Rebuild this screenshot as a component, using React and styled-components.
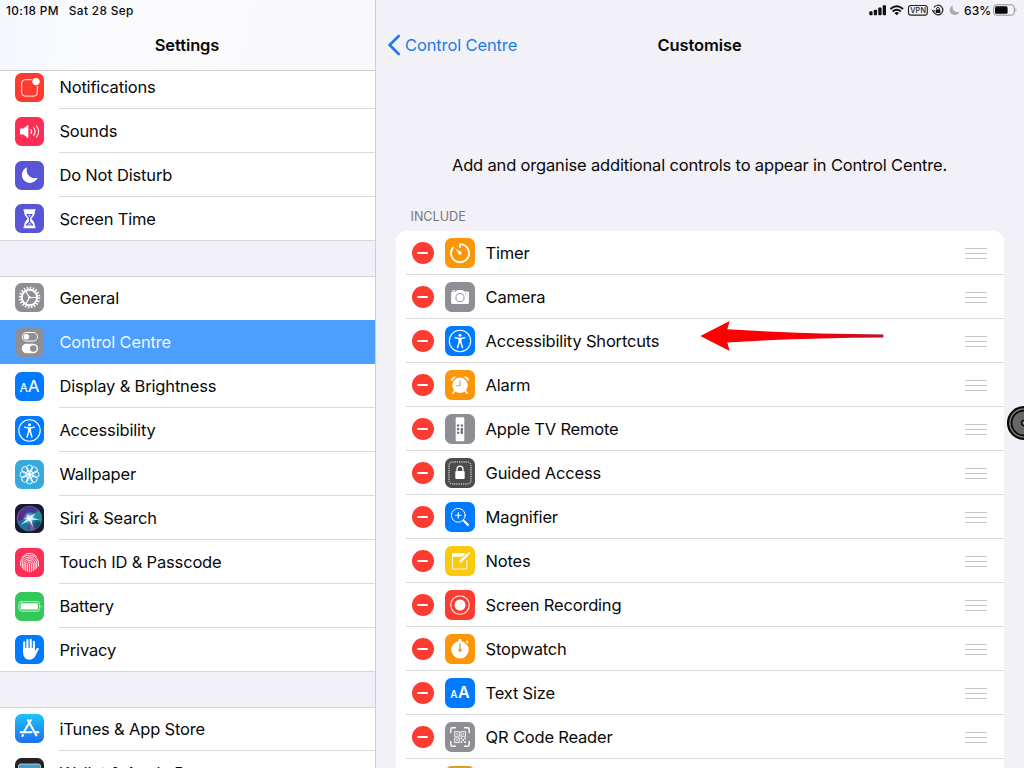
import React from "react";
import styled, { createGlobalStyle } from "styled-components";

const Global = createGlobalStyle`
  * { box-sizing: border-box; }
  html, body { margin: 0; padding: 0; background: #f2f1f7; }
  body { font-family: Inter, "Liberation Sans", sans-serif; color: #0a0a0a; overflow: hidden; }
  svg { display: block; flex: none; }
`;

const Screen = styled.div`
  position: relative;
  width: 1024px;
  height: 768px;
  display: flex;
  overflow: hidden;
  background: #f2f1f7;
`;

const Sidebar = styled.aside`
  width: 376px;
  height: 768px;
  flex: none;
  display: flex;
  flex-direction: column;
  border-right: 1px solid #cfced3;
  background: #f1f0f6;
`;

const SidebarHeader = styled.header`
  height: 71px;
  flex: none;
  border-bottom: 1px solid #cdc8cc;
  background: linear-gradient(100deg, #f3f8ff 0, #f9fafd 22%, #f9f9fb 100%);
`;

const StatusLeft = styled.div`
  height: 20px;
  padding-left: 6px;
  padding-top: 1px;
  display: flex;
  align-items: center;
  gap: 10px;
  font-size: 11.8px;
  font-weight: 500;
  letter-spacing: 0.37px;
  white-space: nowrap;
`;

const NavTitle = styled.h1`
  margin: 0;
  padding-right: 1px;
  height: 50px;
  line-height: 50px;
  text-align: center;
  font-size: 16.5px;
  font-weight: 600;
  letter-spacing: -0.1px;
`;

const SidebarScroll = styled.div`
  flex: 1;
  min-height: 0;
  overflow: hidden;
`;

const Group = styled.div`
  background: #fff;
  margin-top: ${(p) => p.$top}px;
  border-top: ${(p) => (p.$first ? "0" : "1px solid #d6d5da")};
  border-bottom: 1px solid #d6d5da;
`;

const SettingRow = styled.div`
  height: ${(p) => (p.$edge ? 43 : 44)}px;
  padding-left: 15px;
  display: flex;
  align-items: center;
  background: ${(p) => (p.$active ? "#4c9fff" : "transparent")};
  color: ${(p) => (p.$active ? "#eef6ff" : "inherit")};
`;

const SettingLabel = styled.div`
  flex: 1;
  height: 100%;
  margin-left: 15.4px;
  display: flex;
  align-items: center;
  padding-top: ${(p) => (p.$raised ? 0 : 1)}px;
  padding-bottom: ${(p) => (p.$raised ? 1 : 0)}px;
  border-bottom: 1px solid ${(p) => (p.$line ? "#d9d9dc" : "transparent")};
  font-size: 16.5px;
  letter-spacing: -0.17px;
  white-space: nowrap;
`;

const Main = styled.main`
  flex: 1;
  min-width: 0;
  display: flex;
  flex-direction: column;
`;

const StatusRight = styled.div`
  height: 20px;
  padding-right: 7px;
  display: flex;
  align-items: center;
  justify-content: flex-end;
`;

const Percent = styled.span`
  width: 29px;
  font-size: 12px;
  font-weight: 500;
  letter-spacing: 0.1px;
`;

const NavBar = styled.div`
  height: 50px;
  padding: 0 12px 0 11px;
  display: grid;
  grid-template-columns: 1fr auto 1fr;
  align-items: center;
`;

const Back = styled.div`
  display: flex;
  align-items: center;
  gap: 4px;
  color: #1a7ee6;
  font-size: 16.5px;
  letter-spacing: -0.13px;
`;

const PageTitle = styled.h2`
  margin: 0;
  font-size: 16.5px;
  font-weight: 600;
  letter-spacing: -0.1px;
`;

const Hint = styled.p`
  margin: 82px 1px 0 0;
  height: 26px;
  line-height: 26px;
  text-align: center;
  font-size: 16.5px;
  letter-spacing: -0.17px;
  white-space: nowrap;
`;

const SectionLabel = styled.div`
  margin: 29px 0 5px 34.5px;
  height: 19px;
  line-height: 19px;
  font-size: 12.6px;
  color: #77767c;
`;

const Card = styled.section`
  margin: 0 20px;
  flex: 1;
  min-height: 0;
  overflow: hidden;
  border-radius: 10px 10px 0 0;
  background: #fff;
`;

const ControlRow = styled.div`
  height: 44px;
  margin-left: 10px;
  padding: 0 17px 0 5px;
  display: flex;
  align-items: center;
  border-bottom: 1px solid #d9d9dc;
`;

const Remove = styled.span`
  width: 22px;
  height: 22px;
  margin: 1px 11.600px 0 0.500px;
  flex: none;
  border-radius: 50%;
  background: #fd3b31;
  display: flex;
  align-items: center;
  justify-content: center;
  &::after { content: ""; width: 11px; height: 2px; border-radius: 1px; background: #fff; }
`;

const ControlLabel = styled.span`
  flex: 1;
  margin-left: 10.500px;
  font-size: 16.5px;
  letter-spacing: -0.19px;
  white-space: nowrap;
`;

const Handle = styled.span`
  width: 22px;
  height: 11px;
  margin-top: 2px;
  border-top: 1px solid #c4c4c8;
  border-bottom: 1px solid #c4c4c8;
  display: flex;
  align-items: center;
  &::after { content: ""; width: 100%; height: 1px; background: #c4c4c8; }
`;

const TileBox = styled.span`
  width: ${(p) => p.$size}px;
  height: ${(p) => p.$size}px;
  margin-top: ${(p) => (p.$size === 30 ? 1 : 0)}px;
  margin-bottom: ${(p) => (p.$raised ? 2 : 0)}px;
  flex: none;
  border-radius: 6.5px;
  overflow: hidden;
  background: ${(p) => p.$bg};
`;

const Arrow = styled.svg`
  position: absolute;
  left: 696px;
  top: 316px;
`;

const Assist = styled.svg`
  position: absolute;
  left: 1006px;
  top: 405px;
`;

const W = "#fff";
const S = { fill: "none", stroke: W, strokeLinecap: "round", strokeLinejoin: "round" };

const Person = () => (
  <>
    <circle cx="14.5" cy="14.5" r="10.7" {...S} strokeWidth="1.1" />
    <circle cx="14.5" cy="8.7" r="1.5" fill={W} />
    <path d="M9 11.2c0-.5.3-.7.8-.6 3.1.7 6.3.7 9.4 0 .5-.1.8.1.8.6s-.3.6-.7.7l-3.2.6v3l1.500 5.300c.2.600 0 .900-.4 1s-.8-.1-1-.6l-1.400-4.700h-.6l-1.400 4.700c-.2.500-.600.700-1 .6s-.600-.4-.4-1l1.500-5.300v-3l-3.200-.6c-.4-.1-.7-.2-.7-.7Z" fill={W} />
  </>
);

const Gear = () => (
  <g {...S} strokeLinecap="butt">
    <circle cx="14.5" cy="14.5" r="9.7" strokeWidth="2.2" strokeDasharray="1.5 1.547" />
    <circle cx="14.5" cy="14.5" r="7.7" strokeWidth="2" />
    <path d="M14.5 14.5H22M14.5 14.5 10.7 8M14.5 14.5 10.7 21" strokeWidth="1.2" />
    <circle cx="14.5" cy="14.5" r="1.3" fill={W} stroke="none" />
  </g>
);

const Petals = () => (
  <g fill="none" stroke={W} strokeWidth=".95">
    {[0, 45, 90, 135, 180, 225, 270, 315].map((a) => (
      <ellipse key={a} cx="14.5" cy="8" rx="3" ry="3" transform={`rotate(${a} 14.5 14.5)`} />
    ))}
    <circle cx="14.5" cy="14.5" r="3.5" />
    <circle cx="14.5" cy="14.5" r="1.9" fill={W} />
  </g>
);

const Siri = () => (
  <>
    <defs>
      <radialGradient id="siriCore"><stop offset="0" stopColor="#fff" /><stop offset=".35" stopColor="#9fe9f4" stopOpacity=".8" /><stop offset="1" stopColor="#36b6dc" stopOpacity="0" /></radialGradient>
      <linearGradient id="siriTone" x1="0" y1="0" x2="1" y2="1"><stop offset="0" stopColor="#8a2784" /><stop offset=".35" stopColor="#4d2a8b" /><stop offset=".65" stopColor="#176f91" /><stop offset="1" stopColor="#122037" /></linearGradient>
    </defs>
    <circle cx="14.5" cy="14.5" r="12.3" fill="url(#siriTone)" stroke="#71809f" strokeWidth=".7" />
    <path d="M14 13 2.5 17.5C4 24 9 26.5 12 26.5Z" fill="#227c9e" opacity=".8" />
    <path d="M15 13 23.5 6.5C27 11 27 15 26 18Z" fill="#1fa39a" opacity=".7" />
    <path d="M14.5 13 8 4.5C12 2 16 2 18.5 3.5Z" fill="#3b3c98" opacity=".8" />
    <path d="M14.5 14 20 25.5 15 26.5Z" fill="#bd4ba7" opacity=".7" />
    <circle cx="14.5" cy="14" r="7" fill="url(#siriCore)" />
    <path d="M14.5 12.7 20.5 9 17 13.8 25 16 16.5 15.8 18 23.500 14.5 16.3 5.500 21 12.500 14.800 8 14.700 12.700 13.200 11.500 9.500Z" fill="#eafcff" opacity=".92" />
  </>
);

const Finger = () => (
  <g {...S} strokeWidth=".95">
    <path d="M7.2 9.2C9 6.7 11.600 5.400 14.500 5.400s5.500 1.300 7.300 3.800" />
    <path d="M5.600 17.500v-2.200c0-4.600 4-8 8.900-8s8.900 3.400 8.900 8v2.800" />
    <path d="M7.300 20v-4.600c0-3.700 3.100-6.300 7.200-6.300s7.200 2.600 7.200 6.300V20" />
    <path d="M9 21.800v-6c0-3 2.300-5 5.500-5s5.500 2 5.500 5v5.700" />
    <path d="M10.800 22.800v-6.700c0-2.200 1.500-3.600 3.700-3.600s3.700 1.400 3.700 3.600v6.700" />
    <path d="M12.600 23.600v-7.300c0-1.300.8-2.100 1.900-2.100s1.900.8 1.900 2.100v7.300" />
    <path d="M14.500 16v8" />
  </g>
);

const SETTING_ICONS = {
  notifications: { bg: "#fd3b30", art: (
    <>
      <path d="M16.500 6.700H10a3.300 3.300 0 0 0-3.300 3.300v9.800a3.300 3.300 0 0 0 3.300 3.300h9a3.300 3.300 0 0 0 3.300-3.300V13.300" {...S} strokeWidth=".9" />
      <circle cx="21" cy="8.600" r="3.700" fill={W} />
    </>
  ) },
  sounds: { bg: "#fd2d55", art: (
    <>
      <path d="M5 12.200c0-.5.300-.8.800-.8h2.700l4-3.100c.5-.4.900-.2.900.4v11.600c0 .6-.4.800-.9.400l-4-3.100H5.800c-.5 0-.8-.3-.8-.8Z" fill={W} />
      <path d="M16 12.500q1.300 2 0 4M18.700 10.700q2.700 3.800 0 7.600M21.500 8.900q4.200 5.600 0 11.200" {...S} strokeWidth="1.100" />
    </>
  ) },
  moon: { bg: "#5855d6", art: <path d="M12 6.300c-1.800 6.600 3.500 12.700 10.700 10.500C21 20.100 18.200 22 15 22c-4.500 0-8.100-3.500-8.100-7.900 0-3.500 2-6.600 5.100-7.800Z" fill={W} /> },
  hourglass: { bg: "#5855d6", art: (
    <>
      <path d="M8.600 5.300h11.800v1.800h-.5c0 3.800-1.300 5.300-3.600 7.700 2.300 2.400 3.600 3.900 3.600 7.500h.5v1.900H8.600v-1.900h.5c0-3.600 1.300-5.100 3.600-7.500C10.400 12.400 9.100 10.900 9.100 7.100h-.5Z" fill={W} />
      <path d="M11.200 10h6.600c-.5 1.500-1.300 2.400-2.700 3.900v3.500l3 3.100v1h-7.200v-1l3-3.100v-3.500c-1.400-1.500-2.200-2.400-2.700-3.900Z" fill="#5855d6" />
      <path d="M12.800 11.200h3.400L14.500 13ZM14.500 18.500l2 2h-4Z" fill={W} opacity=".75" />
    </>
  ) },
  gear: { bg: "#8f8e94", art: <Gear /> },
  toggles: { bg: "#8f8e94", art: (
    <>
      <rect x="7.200" y="4.500" width="15.300" height="8.600" rx="4.300" {...S} strokeWidth="1" />
      <circle cx="11.400" cy="8.800" r="2.800" fill={W} />
      <rect x="6.800" y="15.700" width="16.200" height="9.600" rx="4.800" fill={W} />
      <circle cx="18.300" cy="20.500" r="3.300" fill="#8f8e94" />
    </>
  ) },
  display: { bg: "#007aff", art: (
    <g fill={W} stroke={W} strokeWidth=".2" fontFamily="Inter, sans-serif"><text x="4.700" y="20.300" fontSize="11.600">A</text><text x="13" y="20.300" fontSize="16.500">A</text></g>
  ) },
  access: { bg: "#007aff", art: <Person /> },
  wallpaper: { bg: "#37aadd", art: <Petals /> },
  siri: { bg: "#171b32", art: <Siri /> },
  touch: { bg: "#fd2d55", art: <Finger /> },
  battery: { bg: "#34c759", art: (
    <>
      <rect x="3.900" y="9.600" width="20.700" height="9.600" rx="2.600" {...S} strokeWidth=".7" />
      <rect x="5.600" y="11.200" width="17.300" height="6.400" rx="1.200" fill={W} />
      <path d="M25.900 12.900q1.500 1.500 0 3Z" fill={W} />
    </>
  ) },
  hand: { bg: "#007aff", art: (
    <>
      <path d="M9.200 7.400v9M12.400 5.100v11M15.700 4.800v11M18.900 6.700v10" {...S} strokeWidth="2.100" />
      <path d="M8.150 13h11.800v3.200l1.600-2.800c.6-1 2-.8 2.200-.1.200.4 0 .9-.2 1.300l-2.500 5c-1.400 3.200-3 5.100-6.500 5.100-4 0-6.400-2.800-6.400-7Z" fill={W} />
    </>
  ) },
  store: { bg: "linear-gradient(#1dc3fa, #1d6ff2)", art: (
    <g {...S} strokeWidth="2.100">
      <path d="M15.800 6.200 8.700 18.300M12.900 6.200l8.400 15.100M5.700 18.300H16.500M20.500 18.300h2.900M7.900 21.200l-.5.800" />
    </g>
  ) },
  wallet: { bg: "#232227", art: (
    <>
      <rect x="3.500" y="6" width="22" height="18" rx="2" fill="#4a9cc9" stroke="#d9d7cf" strokeWidth=".8" />
      <path d="M3.500 11h22" stroke="#f1b93b" strokeWidth="2" />
    </>
  ) },
};

const CONTROL_ICONS = {
  timer: { bg: "#fb9608", art: (
    <>
      <path d="M15 6.200v3.500M15 6.200a9 9 0 1 1-6.600 2.900" {...S} strokeWidth="1.800" strokeLinecap="butt" />
      <path d="m10.200 10.600 5.900 3.100a1.700 1.700 0 1 1-2.500 2.400Z" fill={W} />
    </>
  ) },
  camera: { bg: "#8f8e94", art: (
    <>
      <path d="M6.200 11c0-.9.500-1.400 1.400-1.400h3.500l1-1.600h5.900l1 1.600h3.500c.9 0 1.400.5 1.400 1.400v9.600c0 .9-.5 1.400-1.400 1.400h-15c-.9 0-1.400-.5-1.400-1.400Z" fill={W} />
      <path d="M7.700 8.500h2.200" stroke={W} strokeWidth="1" />
      <circle cx="15" cy="15.600" r="4.100" fill="none" stroke="#8f8e94" strokeWidth="1" />
      <circle cx="20.800" cy="11.700" r=".6" fill="#8f8e94" />
    </>
  ) },
  access: { bg: "#007aff", art: <g transform="translate(.5 .5)"><Person /></g> },
  alarm: { bg: "#fb9608", art: (
    <>
      <path d="M6.300 11.200c-1-2.500 1.500-5.400 4.800-4.600ZM23.700 11.200c1-2.500-1.500-5.400-4.800-4.600Z" fill={W} />
      <circle cx="15" cy="15.300" r="7.700" fill={W} />
      <path d="m10 20.500-2.200 2.700M20 20.500l2.200 2.700" {...S} strokeWidth="1.500" />
      <path d="M15 10.500v5.300h-3.500" fill="none" stroke="#d99a3c" strokeWidth="1" />
    </>
  ) },
  remote: { bg: "#8f8e94", art: (
    <>
      <rect x="10.700" y="3.200" width="8.600" height="24" rx="1.200" fill={W} />
      <g fill="#77767c">
        {[0, 1, 2].map((r) => [0, 1].map((c) => <circle key={`${r}${c}`} cx={13.1 + c * 3.8} cy={11.5 + r * 3.6} r="1.300" />))}
        <rect x="15.700" y="13.900" width="2.300" height="6" rx="1" />
      </g>
    </>
  ) },
  guided: { bg: "#4c4b4d", art: (
    <>
      <rect x="4" y="4" width="22" height="22" rx="3.500" fill="none" stroke={W} strokeWidth="1" strokeDasharray="1.200 1" />
      <rect x="10.300" y="13.100" width="9.400" height="8" rx="1" fill={W} />
      <path d="M12 13.500v-2.300a3 3 0 0 1 6 0v2.300" {...S} strokeWidth="1.300" />
    </>
  ) },
  magnifier: { bg: "#007aff", art: (
    <>
      <circle cx="13.300" cy="13.300" r="6.900" {...S} strokeWidth="1" />
      <path d="M13.300 10.500v5.600M10.500 13.300h5.600" {...S} strokeWidth="1.100" />
      <path d="m18.300 18.300 1.200 1.200" {...S} strokeWidth="1.100" />
      <path d="m19.300 19.300 3.600 3.600" {...S} strokeWidth="2.200" />
    </>
  ) },
  notes: { bg: "#fbca0c", art: (
    <>
      <path d="M21.800 14.500v7.700a.8.800 0 0 1-.8.800H8.300a.8.800 0 0 1-.8-.8V8.500" {...S} strokeWidth=".9" />
      <path d="M7.100 8.200c0-.6.400-1 1-1h12.700l-3.300 3.500H7.100Z" fill={W} />
      <path d="m14 17 .6-2.700 7.700-7.100 1.700 1.900-7.400 7.200Z" fill={W} stroke="#fbca0c" strokeWidth=".5" />
      <path d="m22.700 6.700.8-.7c.8-.5 2.300.8 1.600 1.700l-.7.900Z" fill={W} />
    </>
  ) },
  record: { bg: "#fd3b30", art: (
    <>
      <circle cx="15" cy="15" r="9.300" {...S} strokeWidth="1.100" />
      <circle cx="15" cy="15" r="5.500" fill={W} />
    </>
  ) },
  stopwatch: { bg: "#fb9608", art: (
    <>
      <circle cx="15" cy="15.800" r="8.700" fill={W} />
      <path d="M13.400 5.700c0-1 3.200-1 3.200 0V8h-3.200ZM20.800 7.300l1.500-.9 1.300 1.900-1 1.300Z" fill={W} />
      <path d="M15 9.500v6" stroke="#e49428" strokeWidth="1.300" />
      <circle cx="15" cy="16.200" r="1.600" fill="#e49428" />
    </>
  ) },
  text: { bg: "#007aff", art: (
    <g fill={W} fontFamily="Inter, sans-serif" fontWeight="600"><text x="5.300" y="20.300" fontSize="9.800">A</text><text x="12.900" y="20.300" fontSize="16">A</text></g>
  ) },
  qr: { bg: "#8f8e94", art: (
    <>
      <path d="M5.800 10.500v-3c0-1 .7-1.700 1.700-1.700h3M19.500 5.800h3c1 0 1.700.7 1.700 1.700v3M24.200 19.500v3c0 1-.7 1.700-1.700 1.700h-3M10.500 24.200h-3c-1 0-1.700-.7-1.700-1.700v-3" {...S} strokeWidth="1.400" />
      <g fill="none" stroke={W} strokeWidth=".9">
        <rect x="9.700" y="9.700" width="4.500" height="4.500" /><rect x="16" y="9.700" width="4.500" height="4.500" /><rect x="9.700" y="16" width="4.500" height="4.500" />
      </g>
      <path d="M11.300 11.300h1.300v1.300h-1.300zM17.600 11.300h1.300v1.300h-1.300zM11.300 17.600h1.300v1.300h-1.300zM15.600 15.600h1.600v1.600h-1.600zM17.400 17.300h1.600v1.600h-1.600zM19.300 15.600h1.600v1.600h-1.600zM15.600 19.300h1.600v1.600h-1.600zM19.300 19.300h1.600v1.600h-1.600z" fill={W} />
    </>
  ) },
  wallet: { bg: "#dd9a34", art: null },
};

const Tile = ({ icon, size, raised }) => (
  <TileBox $size={size} $bg={icon.bg} $raised={raised}>
    <svg width={size} height={size} viewBox={`0 0 ${size} ${size}`}>{icon.art}</svg>
  </TileBox>
);

const GROUPS = [
  { top: -6, rows: [["notifications", "Notifications"], ["sounds", "Sounds"], ["moon", "Do Not Disturb"], ["hourglass", "Screen Time"]] },
  { top: 35, rows: [["gear", "General"], ["toggles", "Control Centre"], ["display", "Display & Brightness"], ["access", "Accessibility"], ["wallpaper", "Wallpaper"], ["siri", "Siri & Search"], ["touch", "Touch ID & Passcode"], ["battery", "Battery"], ["hand", "Privacy"]] },
  { top: 35, rows: [["store", "iTunes & App Store"], ["wallet", "Wallet & Apple Pay"]] },
];

const CONTROLS = [
  ["timer", "Timer"], ["camera", "Camera"], ["access", "Accessibility Shortcuts"], ["alarm", "Alarm"],
  ["remote", "Apple TV Remote"], ["guided", "Guided Access"], ["magnifier", "Magnifier"], ["notes", "Notes"],
  ["record", "Screen Recording"], ["stopwatch", "Stopwatch"], ["text", "Text Size"], ["qr", "QR Code Reader"],
  ["wallet", ""],
];

const StatusIcons = () => (
  <svg width="95" height="20" viewBox="869 0 95 20">
    <g fill="#111">
      <rect x="869.300" y="11.300" width="3.300" height="3.900" rx=".8" />
      <rect x="873.800" y="9.700" width="3.300" height="5.500" rx=".8" />
      <rect x="878.300" y="7.600" width="3.300" height="7.600" rx=".8" />
      <rect x="882.700" y="5.300" width="3.300" height="9.900" rx=".8" />
      <path d="m896.700 15.300-2.300-2.400q2.300-1.900 4.600 0Z" />
    </g>
    <g fill="none" stroke="#111" strokeWidth="1.900">
      <path d="M890.400 9q6.300-5.400 12.600 0M892.600 11.500q4.100-3.400 8.200 0" />
    </g>
    <rect x="908.500" y="5.500" width="18.800" height="9.600" rx="2.400" fill="none" stroke="#222" strokeWidth="1.100" />
    <text x="910.300" y="13.100" fontFamily="Inter, sans-serif" fontSize="7.300" fontWeight="500" fill="#222" letterSpacing=".15">VPN</text>
    <path d="M934 7.400a4.800 4.800 0 1 1-.7 3.500M932.200 10.200l1.200 1.500 1.400-1.400" fill="none" stroke="#222" strokeWidth="1.200" />
    <rect x="935.700" y="9.400" width="4.600" height="3.500" rx=".5" fill="#111" />
    <path d="M936.600 9.700v-.9a1.400 1.400 0 0 1 2.800 0v.9" fill="none" stroke="#111" strokeWidth=".9" />
    <path d="M952.700 5.400c-1 4.300 2.300 7.700 6.900 6.400-.9 2-2.800 3.300-4.900 3.300-2.800 0-5-2.200-5-5 0-2.100 1.200-3.900 3-4.700Z" fill="#aaa9ae" />
  </svg>
);

export default function App() {
  return (
    <>
      <Global />
      <Screen>
        <Sidebar>
          <SidebarHeader>
            <StatusLeft><span>10:18 PM</span><span>Sat 28 Sep</span></StatusLeft>
            <NavTitle>Settings</NavTitle>
          </SidebarHeader>
          <SidebarScroll>
            {GROUPS.map((g, gi) => (
              <Group key={gi} $top={g.top} $first={gi === 0}>
                {g.rows.map(([icon, label], i) => {
                  const active = label === "Control Centre";
                  const next = g.rows[i + 1];
                  const raised = gi > 0 && i === 0;
                  return (
                    <SettingRow key={label} $active={active} $edge={raised || !next}>
                      <Tile icon={SETTING_ICONS[icon]} size={29} raised={raised} />
                      <SettingLabel $raised={raised} $line={next && !active && next[1] !== "Control Centre"}>{label}</SettingLabel>
                    </SettingRow>
                  );
                })}
              </Group>
            ))}
          </SidebarScroll>
        </Sidebar>
        <Main>
          <StatusRight>
            <StatusIcons />
            <Percent>63%</Percent>
            <svg width="24" height="12" viewBox="0 0 24 12">
              <rect x=".6" y=".8" width="20.700" height="10.400" rx="2.800" fill="none" stroke="#8e8e93" strokeWidth="1" />
              <rect x="2" y="2.200" width="12.600" height="7.600" rx="1.500" fill="#080808" />
              <path d="M22.600 4q1.600 2 0 4Z" fill="#8e8e93" />
            </svg>
          </StatusRight>
          <NavBar>
            <Back>
              <svg width="14" height="22" viewBox="0 0 14 22"><path d="M11.700 2 2.700 11l9 9" fill="none" stroke="#1a7ee6" strokeWidth="2.700" strokeLinecap="round" strokeLinejoin="miter" /></svg>
              <span>Control Centre</span>
            </Back>
            <PageTitle>Customise</PageTitle>
          </NavBar>
          <Hint>Add and organise additional controls to appear in Control Centre.</Hint>
          <SectionLabel>INCLUDE</SectionLabel>
          <Card>
            {CONTROLS.map(([icon, label]) => (
              <ControlRow key={icon}>
                <Remove />
                <Tile icon={CONTROL_ICONS[icon]} size={30} />
                <ControlLabel>{label}</ControlLabel>
                <Handle />
              </ControlRow>
            ))}
          </Card>
        </Main>
        <Arrow width="192" height="40" viewBox="696 316 192 40">
          <defs><linearGradient id="shaft"><stop offset="0" stopColor="#fe0000" /><stop offset=".6" stopColor="#f80008" /><stop offset="1" stopColor="#b5122a" /></linearGradient></defs>
          <path d="M700.300 336 729.700 321 727.300 329.300Q800 334 883.300 334.400V337.600Q800 338 727.300 342.500L729.700 351Z" fill="url(#shaft)" />
        </Arrow>
        <Assist width="18" height="36" viewBox="1006 405 18 36">
          <circle cx="1024" cy="423" r="15.900" fill="#858585" stroke="#080808" strokeWidth="2.300" />
          <circle cx="1024" cy="423" r="12.500" fill="#666" stroke="#080808" strokeWidth="1.800" />
          <circle cx="1024" cy="423" r="2.400" fill="#999" stroke="#080808" strokeWidth="1.500" />
        </Assist>
      </Screen>
    </>
  );
}
